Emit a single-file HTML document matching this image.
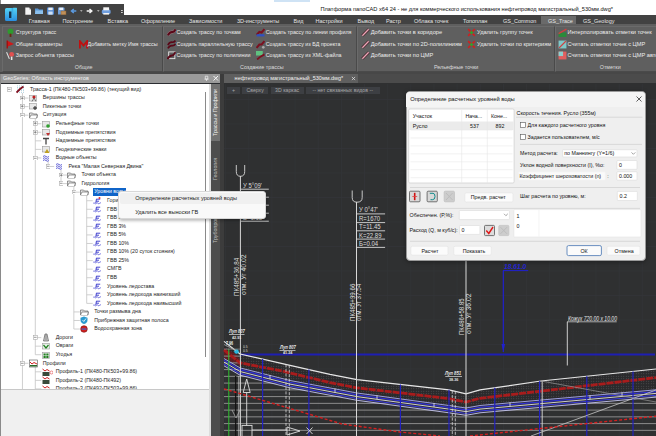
<!DOCTYPE html>
<html><head><meta charset="utf-8">
<style>
*{margin:0;padding:0;box-sizing:border-box}
html,body{width:656px;height:436px;overflow:hidden;background:#2b2d31;font-family:"Liberation Sans",sans-serif;font-size:5.5px;}
.a{position:absolute}
.t{position:absolute;white-space:nowrap;line-height:1}
#title{left:0;top:0;width:656px;height:15px;background:#fff;}
#qat{left:0;top:4px;width:124px;height:11px;background:#424242}
#tabs{left:0;top:15px;width:656px;height:9px;background:#424242}
#ribbon{left:0;top:24px;width:656px;height:48px;background:#5f5f5f}
.tab{color:#e6e6e6;top:19px}
.grp{position:absolute;top:25.5px;height:46px;border:1px solid #6b6b6b;border-bottom-color:#4a4a4a;border-right-color:#4a4a4a}
.rt{color:#ececec;font-size:5.4px}
.gl{color:#dcdcdc;font-size:5.4px;top:63.6px}
.ic{position:absolute;width:7px;height:7px}
</style></head><body>
<!-- title bar -->
<div class="a" id="title"></div>
<div class="a" style="left:0;top:0;width:1px;height:436px;background:#8a8a8a"></div>
<div class="a" style="left:274px;top:0;width:36px;height:2px;background:#cfe3f5"></div>
<div class="t" style="left:320.5px;top:7.2px;color:#111;font-size:5.65px">Платформа nanoCAD x64 24 - не для коммерческого использования нефтепровод магистральный_530мм.dwg*</div>
<div class="a" id="qat"></div>
<div class="a" id="tabs"></div>
<!-- logo -->
<svg class="a" style="left:4px;top:7px" width="14" height="15" viewBox="0 0 14 15"><defs><linearGradient id="lg" x1="0" y1="0" x2="0" y2="1"><stop offset="0" stop-color="#56d4f4"/><stop offset="1" stop-color="#2a8ee0"/></linearGradient></defs><path d="M2.5 1 H8.5 L9.5 0.8 H12.5 Q13 0.8 13 1.5 V12.5 Q13 14 11.5 14 H2.5 Q1 14 1 12.5 V2.5 Q1 1 2.5 1 Z" fill="url(#lg)"/><rect x="5" y="4.5" width="2.6" height="6.5" fill="#16324c"/><rect x="7.6" y="1" width="1.6" height="10" fill="#3aaee8"/></svg>

<!-- qat icons -->
<svg class="a" style="left:0;top:0" width="124" height="24">
<path d="M25.3 7.5 H29 L31 9.5 V14.7 H25.3 Z" fill="#f4f4f4"/><path d="M29 7.5 V9.5 H31" fill="#bbb"/>
<path d="M35 8.5 H38 L39 9.5 H43 V14 H35 Z" fill="#5a96d2"/><path d="M35.5 10.5 H43 V14 H35 Z" fill="#8cc0ec"/>
<rect x="47" y="7.6" width="7" height="7" rx="0.6" fill="#4d86d0"/><rect x="48.3" y="7.6" width="4.4" height="2.6" fill="#f0f0f0"/><rect x="48.3" y="11.5" width="4.4" height="3.2" fill="#cfe0f4"/>
<rect x="58" y="7.6" width="6.5" height="7" rx="0.6" fill="#6f9ed8"/><rect x="59.2" y="7.6" width="4" height="2.4" fill="#e8eef8"/><rect x="61" y="11" width="5" height="3.8" fill="#c0905a" stroke="#8a6030" stroke-width="0.5"/>
<path d="M76.3 11 H71.8 M73.8 9 L71.5 11 L73.8 13" fill="none" stroke="#5b9ae0" stroke-width="1.5"/>
<path d="M80 10.3 L81.3 11.8 L82.6 10.3 Z" fill="#c8c8c8"/>
<path d="M86.7 11 H91.5 M89.5 9 L91.8 11 L89.5 13" fill="none" stroke="#f4f4f4" stroke-width="1.5"/>
<path d="M97 10.3 L98.3 11.8 L99.6 10.3 Z" fill="#c8c8c8"/>
<rect x="101.8" y="9.5" width="8.8" height="4.6" rx="1.5" fill="#6f9ede"/><rect x="103.3" y="7.3" width="5.8" height="3" fill="#f4f4f4"/><rect x="103.3" y="13" width="5.8" height="1.6" fill="#f4f4f4"/>
<rect x="121" y="10" width="1.8" height="1" fill="#ccc"/><rect x="121" y="12" width="1.8" height="1" fill="#ccc"/>
</svg>
<!-- tabs -->
<div class="t tab" style="left:28.7px">Главная</div>
<div class="t tab" style="left:62.5px">Построение</div>
<div class="t tab" style="left:107.5px">Вставка</div>
<div class="t tab" style="left:141px">Оформление</div>
<div class="t tab" style="left:189px">Зависимости</div>
<div class="t tab" style="left:237px">3D-инструменты</div>
<div class="t tab" style="left:293.5px">Вид</div>
<div class="t tab" style="left:315.5px">Настройки</div>
<div class="t tab" style="left:357.5px">Вывод</div>
<div class="t tab" style="left:386px">Растр</div>
<div class="t tab" style="left:414px">Облака точек</div>
<div class="t tab" style="left:463px">Топоплан</div>
<div class="t tab" style="left:503px">GS_Common</div>
<div class="a" style="left:541px;top:16px;width:35px;height:8px;background:#6a6a6a"></div>
<div class="t tab" style="left:548px">GS_Trace</div>
<div class="t tab" style="left:583px">GS_Geology</div>
<!-- ribbon -->
<div class="a" id="ribbon"></div>
<div class="grp" style="left:2px;width:161px"></div>
<div class="grp" style="left:163px;width:194px"></div>
<div class="grp" style="left:357px;width:198px"></div>
<div class="grp" style="left:555px;width:103px"></div>
<div class="a" style="left:0;top:71.5px;width:656px;height:2.5px;background:#474747"></div>
<div class="a" id="ritems" style="left:0;top:1px;width:656px;height:50px"><svg class="a" style="left:5.7px;top:26.7px" width="9" height="9" viewBox="0 0 8 8"><circle cx="4" cy="3" r="2.6" fill="#2e9a2e"/><rect x="3.2" y="5" width="1.6" height="3" fill="#6a2a10"/></svg><div class="t rt" style="left:15.7px;top:29.2px;font-size:5.35px">Структура трасс</div>
<svg class="a" style="left:5.7px;top:38.5px" width="9" height="9" viewBox="0 0 8 8"><path d="M1 0.5 L7 3.5 L1 6 Z" fill="#d01818"/><rect x="0.5" y="0.5" width="1.2" height="7" fill="#a01010"/></svg><div class="t rt" style="left:15.7px;top:41.0px;font-size:5.35px">Общие параметры</div>
<svg class="a" style="left:5.7px;top:49.9px" width="9" height="9" viewBox="0 0 8 8"><path d="M0.5 1 L3 7" stroke="#ddd" stroke-width="1"/><circle cx="5" cy="3" r="2.2" fill="#e05050"/><rect x="4.3" y="5" width="1.4" height="3" fill="#e8e8e8"/></svg><div class="t rt" style="left:15.7px;top:52.400000000000006px;font-size:5.35px">Запрос объекта трассы</div>
<svg class="a" style="left:78.7px;top:38.5px" width="9" height="9" viewBox="0 0 8 8"><path d="M0.8 7.5 L0.8 1 L4 5 L7.2 1 L7.2 7.5" stroke="#c01010" stroke-width="1.6" fill="none"/></svg><div class="t rt" style="left:87.5px;top:41.0px;font-size:5.35px">Добавить метку Имя трассы</div>
<svg class="a" style="left:166.6px;top:26.7px" width="9" height="9" viewBox="0 0 8 8"><path d="M0.8 6.5 Q2.5 3.2 5 3.6 Q6.5 3.6 7.5 1.2" stroke="#d08090" stroke-width="2.6" fill="none" opacity="0.5"/><path d="M0.8 6.5 Q2.5 3.2 5 3.6 Q6.5 3.6 7.5 1.2" stroke="#5a0818" stroke-width="1.8" fill="none"/></svg><div class="t rt" style="left:176.6px;top:29.2px;font-size:5.35px">Создать трассу по точкам</div>
<svg class="a" style="left:166.6px;top:38.5px" width="9" height="9" viewBox="0 0 8 8"><path d="M0.8 4.5 Q2.5 1.5 5 2 Q6.5 2 7.5 0.5 M0.8 7.5 Q2.5 4.5 5 5 Q6.5 5 7.5 3.5" stroke="#5a0818" stroke-width="1.5" fill="none"/></svg><div class="t rt" style="left:176.6px;top:41.0px;font-size:5.35px">Создать параллельную трассу</div>
<svg class="a" style="left:166.6px;top:49.9px" width="9" height="9" viewBox="0 0 8 8"><rect x="1.5" y="0.8" width="5.5" height="6" fill="none" stroke="#e8e8e8" stroke-width="0.8"/><path d="M0.5 7.2 Q2 4 4.5 4 Q6 4 7.5 1" stroke="#5a0818" stroke-width="1.7" fill="none"/></svg><div class="t rt" style="left:176.6px;top:52.400000000000006px;font-size:5.35px">Создать трассу по полилинии</div>
<svg class="a" style="left:255.7px;top:26.7px" width="9" height="9" viewBox="0 0 8 8"><path d="M0.5 6 L3 3.5 L5 4 L7.5 1" stroke="#7a1020" stroke-width="1.8" fill="none"/><rect x="0.5" y="5.5" width="7" height="2" fill="#3050c0"/></svg><div class="t rt" style="left:265.7px;top:29.2px;font-size:5.35px">Создать трассу по линии профиля</div>
<svg class="a" style="left:255.7px;top:38.5px" width="9" height="9" viewBox="0 0 8 8"><path d="M0.5 7 L3 4 L5 4 L7.5 1" stroke="#7a1020" stroke-width="1.8" fill="none"/><circle cx="6.5" cy="6.5" r="1.2" fill="#aaa"/></svg><div class="t rt" style="left:265.7px;top:41.0px;font-size:5.35px">Создать трассу из БД проекта</div>
<svg class="a" style="left:255.7px;top:49.9px" width="9" height="9" viewBox="0 0 8 8"><rect x="0" y="0" width="6" height="4" fill="#60c080"/><path d="M1 7.5 L4 5 L7.5 3" stroke="#7a1020" stroke-width="1.6" fill="none"/></svg><div class="t rt" style="left:265.7px;top:52.400000000000006px;font-size:5.35px">Создать трассу из XML-файла</div>
<svg class="a" style="left:360.7px;top:26.7px" width="9" height="9" viewBox="0 0 8 8"><path d="M1.2 6.8 L6.8 1.2" stroke="#3a1018" stroke-width="2.4"/><path d="M1.2 6.8 L6.8 1.2" stroke="#e8a8b8" stroke-width="1.3"/></svg><div class="t rt" style="left:370.7px;top:29.2px;font-size:5.65px">Добавить точки в коридоре</div>
<svg class="a" style="left:360.7px;top:38.5px" width="9" height="9" viewBox="0 0 8 8"><path d="M1.2 6.8 L6.8 1.2" stroke="#3a1018" stroke-width="2.4"/><path d="M1.2 6.8 L6.8 1.2" stroke="#e8a8b8" stroke-width="1.3"/></svg><div class="t rt" style="left:370.7px;top:41.0px;font-size:5.65px">Добавить точки по 2D-полилиниям</div>
<svg class="a" style="left:360.7px;top:49.9px" width="9" height="9" viewBox="0 0 8 8"><path d="M1.2 6.8 L6.8 1.2" stroke="#3a1018" stroke-width="2.4"/><path d="M1.2 6.8 L6.8 1.2" stroke="#e8a8b8" stroke-width="1.3"/></svg><div class="t rt" style="left:370.7px;top:52.400000000000006px;font-size:5.65px">Добавить точки по ЦМР</div>
<svg class="a" style="left:467.0px;top:26.7px" width="9" height="9" viewBox="0 0 8 8"><path d="M1 1 L7 7 M7 1 L1 7" stroke="#d02020" stroke-width="1.4"/><circle cx="4" cy="4" r="1.4" fill="#30a030"/></svg><div class="t rt" style="left:477px;top:29.2px;font-size:5.65px">Удалить группу точек</div>
<svg class="a" style="left:467.0px;top:38.5px" width="9" height="9" viewBox="0 0 8 8"><path d="M1 1 L7 7 M7 1 L1 7" stroke="#d02020" stroke-width="1.4"/><circle cx="4" cy="4" r="1.4" fill="#30a030"/></svg><div class="t rt" style="left:477px;top:41.0px;font-size:5.65px">Удалить точки по критериям</div>
<svg class="a" style="left:557.6px;top:26.7px" width="9" height="9" viewBox="0 0 8 8"><rect x="0.5" y="4" width="7" height="4" fill="#2a8a3a"/><path d="M0.5 5 L7.5 1" stroke="#d04040" stroke-width="1.2"/></svg><div class="t rt" style="left:567.6px;top:29.2px;font-size:5.65px">Интерполировать отметки точек</div>
<svg class="a" style="left:557.6px;top:38.5px" width="9" height="9" viewBox="0 0 8 8"><rect x="0.5" y="0.5" width="7" height="7" fill="#7fc8c8"/><path d="M1 7 L7 1" stroke="#d04040" stroke-width="1.2"/></svg><div class="t rt" style="left:567.6px;top:41.0px;font-size:5.65px">Считать отметки точек с ЦМР</div>
<svg class="a" style="left:557.6px;top:49.9px" width="9" height="9" viewBox="0 0 8 8"><rect x="0.5" y="0.5" width="7" height="7" fill="#e06060"/><rect x="0.5" y="0.5" width="4" height="4" fill="#8ccfcf"/></svg><div class="t rt" style="left:567.6px;top:52.400000000000006px;font-size:5.65px">Считать отметки точек с ЦМР автоматически</div>
<div class="t gl" style="left:74.7px">Общие</div>
<div class="t gl" style="left:240px">Создание трассы</div>
<div class="t gl" style="left:433.9px">Рельефные точки</div>
<div class="t gl" style="left:599.7px">Отметки</div></div>
<!-- PAL_START -->
<div class="a" style="left:1px;top:74px;width:219px;height:9px;background:#9a9a9a"></div>
<div class="t" style="left:3px;top:75.5px;color:#f2f2f2;font-size:5.4px">GeoSeries: Область инструментов</div>
<svg class="a" style="left:203px;top:75px" width="16" height="7" viewBox="0 0 16 7"><path d="M2.3 1.2 H4.8 V4 H2.3 Z M1.5 4.2 H5.6 M3.55 4.2 V6" stroke="#f0f0f0" stroke-width="0.7" fill="none"/><path d="M10.5 1 L15 5.5 M15 1 L10.5 5.5" stroke="#f4f4f4" stroke-width="1"/></svg>
<div class="a" style="left:1px;top:83.5px;width:208px;height:305px;background:#fff"></div>
<div class="a" style="left:1px;top:388.5px;width:208px;height:1px;background:#c8c8c8"></div>
<div class="a" style="left:1px;top:389.5px;width:208px;height:47px;background:#f0f0f0"></div>
<div class="a" style="left:205px;top:92px;width:1.2px;height:265px;background:#8a8a8a"></div>
<div class="a" style="left:0;top:0;width:209px;height:389px;overflow:hidden">
<svg class="a" style="left:0;top:0" width="210" height="389" stroke="#c4c4c4" stroke-width="0.8"><line x1="22.45" y1="93.0" x2="22.45" y2="389" /><line x1="22.45" y1="98.055" x2="28.45" y2="98.055" /><line x1="22.45" y1="106.61" x2="28.45" y2="106.61" /><line x1="35.3" y1="118.66499999999999" x2="35.3" y2="354.705" /><line x1="22.45" y1="115.16499999999999" x2="28.45" y2="115.16499999999999" /><line x1="35.3" y1="123.72" x2="41.3" y2="123.72" /><line x1="35.3" y1="132.275" x2="41.3" y2="132.275" /><line x1="35.3" y1="140.82999999999998" x2="41.3" y2="140.82999999999998" /><line x1="35.3" y1="149.385" x2="41.3" y2="149.385" /><line x1="48.15" y1="161.44" x2="48.15" y2="166.495" /><line x1="35.3" y1="157.94" x2="41.3" y2="157.94" /><line x1="61.0" y1="169.995" x2="61.0" y2="183.605" /><line x1="48.15" y1="166.495" x2="54.15" y2="166.495" /><line x1="61.0" y1="175.05" x2="67.0" y2="175.05" /><line x1="73.85" y1="187.105" x2="73.85" y2="329.03999999999996" /><line x1="61.0" y1="183.605" x2="67.0" y2="183.605" /><line x1="86.69999999999999" y1="195.66" x2="86.69999999999999" y2="303.375" /><line x1="73.85" y1="192.16" x2="79.85" y2="192.16" /><line x1="86.69999999999999" y1="200.715" x2="92.69999999999999" y2="200.715" /><line x1="86.69999999999999" y1="209.26999999999998" x2="92.69999999999999" y2="209.26999999999998" /><line x1="86.69999999999999" y1="217.825" x2="92.69999999999999" y2="217.825" /><line x1="86.69999999999999" y1="226.38" x2="92.69999999999999" y2="226.38" /><line x1="86.69999999999999" y1="234.935" x2="92.69999999999999" y2="234.935" /><line x1="86.69999999999999" y1="243.49" x2="92.69999999999999" y2="243.49" /><line x1="86.69999999999999" y1="252.045" x2="92.69999999999999" y2="252.045" /><line x1="86.69999999999999" y1="260.6" x2="92.69999999999999" y2="260.6" /><line x1="86.69999999999999" y1="269.155" x2="92.69999999999999" y2="269.155" /><line x1="86.69999999999999" y1="277.71" x2="92.69999999999999" y2="277.71" /><line x1="86.69999999999999" y1="286.265" x2="92.69999999999999" y2="286.265" /><line x1="86.69999999999999" y1="294.82" x2="92.69999999999999" y2="294.82" /><line x1="86.69999999999999" y1="303.375" x2="92.69999999999999" y2="303.375" /><line x1="73.85" y1="311.93" x2="79.85" y2="311.93" /><line x1="73.85" y1="320.485" x2="79.85" y2="320.485" /><line x1="73.85" y1="329.03999999999996" x2="79.85" y2="329.03999999999996" /><line x1="35.3" y1="337.595" x2="41.3" y2="337.595" /><line x1="35.3" y1="346.15" x2="41.3" y2="346.15" /><line x1="35.3" y1="354.705" x2="41.3" y2="354.705" /><line x1="35.3" y1="366.76" x2="35.3" y2="389" /><line x1="22.45" y1="363.26" x2="28.45" y2="363.26" /><line x1="35.3" y1="371.815" x2="41.3" y2="371.815" /><line x1="35.3" y1="380.37" x2="41.3" y2="380.37" /><line x1="35.3" y1="388.925" x2="41.3" y2="388.925" /></svg>
<svg class="a" style="left:7.30px;top:87.20px" width="4.6" height="4.6" viewBox="-2.3 -2.3 4.6 4.6"><rect x="-2" y="-2" width="4" height="4" fill="#fff" stroke="#aaa" stroke-width="0.6"/><path d="M-1.3 0 H1.3" stroke="#555" stroke-width="0.6"/></svg>
<svg class="a" style="left:16.00px;top:85.30px" width="11" height="9" viewBox="0 0 11 9"><rect x="1" y="0" width="7" height="8" fill="#fff"/><path d="M1.5 0.5 V8 M3.5 0.5 V8 M5.5 0.5 V8 M7.5 0.5 V8" stroke="#3a90b0" stroke-width="0.5" stroke-dasharray="0.8 0.8"/><path d="M0.5 7.5 L4 4 L7.5 1.5" stroke="#801020" stroke-width="1.8"/></svg>
<div class="t" style="left:30.00px;top:86.80px;color:#1e1e1e;font-size:5.25px">Трасса-1 (ПК480-ПК503+99.86) (текущий вид)</div>
<svg class="a" style="left:20.15px;top:95.76px" width="4.6" height="4.6" viewBox="-2.3 -2.3 4.6 4.6"><rect x="-2" y="-2" width="4" height="4" fill="#fff" stroke="#aaa" stroke-width="0.6"/><path d="M-1.3 0 H1.3 M0 -1.3 V1.3" stroke="#555" stroke-width="0.6"/></svg>
<svg class="a" style="left:28.85px;top:93.86px" width="11" height="9" viewBox="0 0 11 9"><rect x="0.5" y="1.5" width="7" height="5.5" fill="#e8e8e8" stroke="#999" stroke-width="0.6"/><circle cx="5" cy="3" r="1.6" fill="#c02020"/><path d="M3 7.5 L5 4 L7 7.5" stroke="#333" stroke-width="0.6" fill="none"/></svg>
<div class="t" style="left:42.85px;top:95.36px;color:#1e1e1e;font-size:5.25px">Вершины трассы</div>
<svg class="a" style="left:20.15px;top:104.31px" width="4.6" height="4.6" viewBox="-2.3 -2.3 4.6 4.6"><rect x="-2" y="-2" width="4" height="4" fill="#fff" stroke="#aaa" stroke-width="0.6"/><path d="M-1.3 0 H1.3 M0 -1.3 V1.3" stroke="#555" stroke-width="0.6"/></svg>
<svg class="a" style="left:28.85px;top:102.41px" width="11" height="9" viewBox="0 0 11 9"><rect x="0.5" y="1.5" width="7" height="5.5" fill="#e8e8e8" stroke="#999" stroke-width="0.6"/><path d="M6 4 V8 M4 6 H8" stroke="#222" stroke-width="1"/></svg>
<div class="t" style="left:42.85px;top:103.91px;color:#1e1e1e;font-size:5.25px">Пикетные точки</div>
<svg class="a" style="left:20.15px;top:112.86px" width="4.6" height="4.6" viewBox="-2.3 -2.3 4.6 4.6"><rect x="-2" y="-2" width="4" height="4" fill="#fff" stroke="#aaa" stroke-width="0.6"/><path d="M-1.3 0 H1.3" stroke="#555" stroke-width="0.6"/></svg>
<svg class="a" style="left:28.85px;top:110.96px" width="11" height="9" viewBox="0 0 11 9"><path d="M0.5 2 H3.5 L4.5 3 H8 V7 H0.5 Z" fill="#e6e6e6" stroke="#555" stroke-width="0.6"/><path d="M0.5 7 L2 4 H8.5 L7.5 7" fill="#fff" stroke="#555" stroke-width="0.6"/></svg>
<div class="t" style="left:42.85px;top:112.46px;color:#1e1e1e;font-size:5.25px">Ситуация</div>
<svg class="a" style="left:33.00px;top:121.42px" width="4.6" height="4.6" viewBox="-2.3 -2.3 4.6 4.6"><rect x="-2" y="-2" width="4" height="4" fill="#fff" stroke="#aaa" stroke-width="0.6"/><path d="M-1.3 0 H1.3 M0 -1.3 V1.3" stroke="#555" stroke-width="0.6"/></svg>
<svg class="a" style="left:41.70px;top:119.52px" width="11" height="9" viewBox="0 0 11 9"><rect x="0.5" y="1.5" width="7" height="5.5" fill="#e8e8e8" stroke="#999" stroke-width="0.6"/><circle cx="6" cy="6" r="1.8" fill="#30a030"/></svg>
<div class="t" style="left:55.70px;top:121.02px;color:#1e1e1e;font-size:5.25px">Рельефные точки</div>
<svg class="a" style="left:33.00px;top:129.97px" width="4.6" height="4.6" viewBox="-2.3 -2.3 4.6 4.6"><rect x="-2" y="-2" width="4" height="4" fill="#fff" stroke="#aaa" stroke-width="0.6"/><path d="M-1.3 0 H1.3 M0 -1.3 V1.3" stroke="#555" stroke-width="0.6"/></svg>
<svg class="a" style="left:41.70px;top:128.08px" width="11" height="9" viewBox="0 0 11 9"><rect x="0.5" y="1.5" width="7" height="5.5" fill="#e8e8e8" stroke="#999" stroke-width="0.6"/><path d="M4 5 L8 5 L6 8 Z" fill="#c03030"/></svg>
<div class="t" style="left:55.70px;top:129.58px;color:#1e1e1e;font-size:5.25px">Подземные препятствия</div>
<svg class="a" style="left:41.70px;top:136.63px" width="11" height="9" viewBox="0 0 11 9"><path d="M1 1.5 H7 M4 1.5 V7.5" stroke="#444" stroke-width="1.3"/></svg>
<div class="t" style="left:55.70px;top:138.13px;color:#1e1e1e;font-size:5.25px">Надземные препятствия</div>
<svg class="a" style="left:41.70px;top:145.19px" width="11" height="9" viewBox="0 0 11 9"><rect x="0.5" y="1.5" width="7" height="5.5" fill="#e8e8e8" stroke="#999" stroke-width="0.6"/><path d="M5 4 L7.5 8 H2.5 Z" fill="#c0a020"/></svg>
<div class="t" style="left:55.70px;top:146.69px;color:#1e1e1e;font-size:5.25px">Геодезические знаки</div>
<svg class="a" style="left:33.00px;top:155.64px" width="4.6" height="4.6" viewBox="-2.3 -2.3 4.6 4.6"><rect x="-2" y="-2" width="4" height="4" fill="#fff" stroke="#aaa" stroke-width="0.6"/><path d="M-1.3 0 H1.3" stroke="#555" stroke-width="0.6"/></svg>
<svg class="a" style="left:41.70px;top:153.74px" width="11" height="9" viewBox="0 0 11 9"><path d="M1 2.5 Q2.5 1 4 2.5 T7 2.5 M1 4.5 Q2.5 3 4 4.5 T7 4.5 M1 6.5 Q2.5 5 4 6.5 T7 6.5" stroke="#5050d0" stroke-width="0.9" fill="none"/></svg>
<div class="t" style="left:55.70px;top:155.24px;color:#1e1e1e;font-size:5.25px">Водные объекты</div>
<svg class="a" style="left:45.85px;top:164.19px" width="4.6" height="4.6" viewBox="-2.3 -2.3 4.6 4.6"><rect x="-2" y="-2" width="4" height="4" fill="#fff" stroke="#aaa" stroke-width="0.6"/><path d="M-1.3 0 H1.3" stroke="#555" stroke-width="0.6"/></svg>
<svg class="a" style="left:54.55px;top:162.30px" width="11" height="9" viewBox="0 0 11 9"><path d="M1 2.5 Q2.5 1 4 2.5 T7 2.5 M1 4.5 Q2.5 3 4 4.5 T7 4.5 M1 6.5 Q2.5 5 4 6.5 T7 6.5" stroke="#5050d0" stroke-width="0.9" fill="none"/></svg>
<div class="t" style="left:68.55px;top:163.80px;color:#1e1e1e;font-size:5.25px">Река "Малая Северная Двина"</div>
<svg class="a" style="left:58.70px;top:172.75px" width="4.6" height="4.6" viewBox="-2.3 -2.3 4.6 4.6"><rect x="-2" y="-2" width="4" height="4" fill="#fff" stroke="#aaa" stroke-width="0.6"/><path d="M-1.3 0 H1.3 M0 -1.3 V1.3" stroke="#555" stroke-width="0.6"/></svg>
<svg class="a" style="left:67.40px;top:170.85px" width="11" height="9" viewBox="0 0 11 9"><path d="M0.5 2 H3.5 L4.5 3 H8 V7 H0.5 Z" fill="#e6e6e6" stroke="#555" stroke-width="0.6"/><path d="M0.5 7 L2 4 H8.5 L7.5 7" fill="#fff" stroke="#555" stroke-width="0.6"/></svg>
<div class="t" style="left:81.40px;top:172.35px;color:#1e1e1e;font-size:5.25px">Точки объекта</div>
<svg class="a" style="left:58.70px;top:181.30px" width="4.6" height="4.6" viewBox="-2.3 -2.3 4.6 4.6"><rect x="-2" y="-2" width="4" height="4" fill="#fff" stroke="#aaa" stroke-width="0.6"/><path d="M-1.3 0 H1.3" stroke="#555" stroke-width="0.6"/></svg>
<svg class="a" style="left:67.40px;top:179.41px" width="11" height="9" viewBox="0 0 11 9"><path d="M0.5 2 H3.5 L4.5 3 H8 V7 H0.5 Z" fill="#e6e6e6" stroke="#555" stroke-width="0.6"/><path d="M0.5 7 L2 4 H8.5 L7.5 7" fill="#fff" stroke="#555" stroke-width="0.6"/></svg>
<div class="t" style="left:81.40px;top:180.91px;color:#1e1e1e;font-size:5.25px">Гидрология</div>
<svg class="a" style="left:71.55px;top:189.86px" width="4.6" height="4.6" viewBox="-2.3 -2.3 4.6 4.6"><rect x="-2" y="-2" width="4" height="4" fill="#fff" stroke="#aaa" stroke-width="0.6"/><path d="M-1.3 0 H1.3" stroke="#555" stroke-width="0.6"/></svg>
<svg class="a" style="left:80.25px;top:187.96px" width="11" height="9" viewBox="0 0 11 9"><path d="M0.5 2 H3.5 L4.5 3 H8 V7 H0.5 Z" fill="#e6e6e6" stroke="#555" stroke-width="0.6"/><path d="M0.5 7 L2 4 H8.5 L7.5 7" fill="#fff" stroke="#555" stroke-width="0.6"/></svg>
<div class="a" style="left:92.75px;top:188.36px;width:33px;height:7.2px;background:#1064c8"></div>
<div class="t" style="left:94.25px;top:189.46px;color:#fff;font-size:5.25px">Уровни воды</div>
<svg class="a" style="left:93.10px;top:196.52px" width="11" height="9" viewBox="0 0 11 9"><path d="M3.2 2.2 H7.2 M3.4 2.2 L2.8 6 M3.2 4.2 H6" stroke="#3030c8" stroke-width="0.9" fill="none"/><path d="M0.2 6.3 Q1 5.3 1.8 6.3 T3.4 6.3 T5 6.3 T6.6 6.3 T8 6.3" stroke="#3a3ad0" stroke-width="0.7" fill="none"/><circle cx="6.5" cy="1" r="1" fill="#e03030"/></svg>
<div class="t" style="left:107.10px;top:198.02px;color:#1e1e1e;font-size:5.25px">Горизонт меженных вод</div>
<svg class="a" style="left:93.10px;top:205.07px" width="11" height="9" viewBox="0 0 11 9"><path d="M3.2 2.2 H7.2 M3.4 2.2 L2.8 6 M3.2 4.2 H6" stroke="#3030c8" stroke-width="0.9" fill="none"/><path d="M0.2 6.3 Q1 5.3 1.8 6.3 T3.4 6.3 T5 6.3 T6.6 6.3 T8 6.3" stroke="#3a3ad0" stroke-width="0.7" fill="none"/></svg>
<div class="t" style="left:107.10px;top:206.57px;color:#1e1e1e;font-size:5.25px">ГВВ 1%</div>
<svg class="a" style="left:93.10px;top:213.62px" width="11" height="9" viewBox="0 0 11 9"><path d="M3.2 2.2 H7.2 M3.4 2.2 L2.8 6 M3.2 4.2 H6" stroke="#3030c8" stroke-width="0.9" fill="none"/><path d="M0.2 6.3 Q1 5.3 1.8 6.3 T3.4 6.3 T5 6.3 T6.6 6.3 T8 6.3" stroke="#3a3ad0" stroke-width="0.7" fill="none"/></svg>
<div class="t" style="left:107.10px;top:215.12px;color:#1e1e1e;font-size:5.25px">ГВВ 2%</div>
<svg class="a" style="left:93.10px;top:222.18px" width="11" height="9" viewBox="0 0 11 9"><path d="M3.2 2.2 H7.2 M3.4 2.2 L2.8 6 M3.2 4.2 H6" stroke="#3030c8" stroke-width="0.9" fill="none"/><path d="M0.2 6.3 Q1 5.3 1.8 6.3 T3.4 6.3 T5 6.3 T6.6 6.3 T8 6.3" stroke="#3a3ad0" stroke-width="0.7" fill="none"/></svg>
<div class="t" style="left:107.10px;top:223.68px;color:#1e1e1e;font-size:5.25px">ГВВ 3%</div>
<svg class="a" style="left:93.10px;top:230.74px" width="11" height="9" viewBox="0 0 11 9"><path d="M3.2 2.2 H7.2 M3.4 2.2 L2.8 6 M3.2 4.2 H6" stroke="#3030c8" stroke-width="0.9" fill="none"/><path d="M0.2 6.3 Q1 5.3 1.8 6.3 T3.4 6.3 T5 6.3 T6.6 6.3 T8 6.3" stroke="#3a3ad0" stroke-width="0.7" fill="none"/></svg>
<div class="t" style="left:107.10px;top:232.24px;color:#1e1e1e;font-size:5.25px">ГВВ 5%</div>
<svg class="a" style="left:93.10px;top:239.29px" width="11" height="9" viewBox="0 0 11 9"><path d="M3.2 2.2 H7.2 M3.4 2.2 L2.8 6 M3.2 4.2 H6" stroke="#3030c8" stroke-width="0.9" fill="none"/><path d="M0.2 6.3 Q1 5.3 1.8 6.3 T3.4 6.3 T5 6.3 T6.6 6.3 T8 6.3" stroke="#3a3ad0" stroke-width="0.7" fill="none"/></svg>
<div class="t" style="left:107.10px;top:240.79px;color:#1e1e1e;font-size:5.25px">ГВВ 10%</div>
<svg class="a" style="left:93.10px;top:247.84px" width="11" height="9" viewBox="0 0 11 9"><path d="M3.2 2.2 H7.2 M3.4 2.2 L2.8 6 M3.2 4.2 H6" stroke="#3030c8" stroke-width="0.9" fill="none"/><path d="M0.2 6.3 Q1 5.3 1.8 6.3 T3.4 6.3 T5 6.3 T6.6 6.3 T8 6.3" stroke="#3a3ad0" stroke-width="0.7" fill="none"/></svg>
<div class="t" style="left:107.10px;top:249.34px;color:#1e1e1e;font-size:5.25px">ГВВ 10% (20 суток стояния)</div>
<svg class="a" style="left:93.10px;top:256.40px" width="11" height="9" viewBox="0 0 11 9"><path d="M3.2 2.2 H7.2 M3.4 2.2 L2.8 6 M3.2 4.2 H6" stroke="#3030c8" stroke-width="0.9" fill="none"/><path d="M0.2 6.3 Q1 5.3 1.8 6.3 T3.4 6.3 T5 6.3 T6.6 6.3 T8 6.3" stroke="#3a3ad0" stroke-width="0.7" fill="none"/></svg>
<div class="t" style="left:107.10px;top:257.90px;color:#1e1e1e;font-size:5.25px">ГВВ 25%</div>
<svg class="a" style="left:93.10px;top:264.95px" width="11" height="9" viewBox="0 0 11 9"><path d="M3.2 2.2 H7.2 M3.4 2.2 L2.8 6 M3.2 4.2 H6" stroke="#3030c8" stroke-width="0.9" fill="none"/><path d="M0.2 6.3 Q1 5.3 1.8 6.3 T3.4 6.3 T5 6.3 T6.6 6.3 T8 6.3" stroke="#3a3ad0" stroke-width="0.7" fill="none"/></svg>
<div class="t" style="left:107.10px;top:266.45px;color:#1e1e1e;font-size:5.25px">СМГВ</div>
<svg class="a" style="left:93.10px;top:273.51px" width="11" height="9" viewBox="0 0 11 9"><path d="M3.2 2.2 H7.2 M3.4 2.2 L2.8 6 M3.2 4.2 H6" stroke="#3030c8" stroke-width="0.9" fill="none"/><path d="M0.2 6.3 Q1 5.3 1.8 6.3 T3.4 6.3 T5 6.3 T6.6 6.3 T8 6.3" stroke="#3a3ad0" stroke-width="0.7" fill="none"/></svg>
<div class="t" style="left:107.10px;top:275.01px;color:#1e1e1e;font-size:5.25px">ГВВ</div>
<svg class="a" style="left:93.10px;top:282.06px" width="11" height="9" viewBox="0 0 11 9"><path d="M3.2 2.2 H7.2 M3.4 2.2 L2.8 6 M3.2 4.2 H6" stroke="#3030c8" stroke-width="0.9" fill="none"/><path d="M0.2 6.3 Q1 5.3 1.8 6.3 T3.4 6.3 T5 6.3 T6.6 6.3 T8 6.3" stroke="#3a3ad0" stroke-width="0.7" fill="none"/></svg>
<div class="t" style="left:107.10px;top:283.56px;color:#1e1e1e;font-size:5.25px">Уровень ледостава</div>
<svg class="a" style="left:93.10px;top:290.62px" width="11" height="9" viewBox="0 0 11 9"><path d="M3.2 2.2 H7.2 M3.4 2.2 L2.8 6 M3.2 4.2 H6" stroke="#3030c8" stroke-width="0.9" fill="none"/><path d="M0.2 6.3 Q1 5.3 1.8 6.3 T3.4 6.3 T5 6.3 T6.6 6.3 T8 6.3" stroke="#3a3ad0" stroke-width="0.7" fill="none"/></svg>
<div class="t" style="left:107.10px;top:292.12px;color:#1e1e1e;font-size:5.25px">Уровень ледохода наинизший</div>
<svg class="a" style="left:93.10px;top:299.18px" width="11" height="9" viewBox="0 0 11 9"><path d="M3.2 2.2 H7.2 M3.4 2.2 L2.8 6 M3.2 4.2 H6" stroke="#3030c8" stroke-width="0.9" fill="none"/><path d="M0.2 6.3 Q1 5.3 1.8 6.3 T3.4 6.3 T5 6.3 T6.6 6.3 T8 6.3" stroke="#3a3ad0" stroke-width="0.7" fill="none"/></svg>
<div class="t" style="left:107.10px;top:300.68px;color:#1e1e1e;font-size:5.25px">Уровень ледохода наивысший</div>
<svg class="a" style="left:80.25px;top:307.73px" width="11" height="9" viewBox="0 0 11 9"><path d="M0.5 2 H3.5 L4.5 3 H8 V7 H0.5 Z" fill="#e6e6e6" stroke="#555" stroke-width="0.6"/><path d="M0.5 7 L2 4 H8.5 L7.5 7" fill="#fff" stroke="#555" stroke-width="0.6"/></svg>
<div class="t" style="left:94.25px;top:309.23px;color:#1e1e1e;font-size:5.25px">Точки размыва дна</div>
<svg class="a" style="left:80.25px;top:316.29px" width="11" height="9" viewBox="0 0 11 9"><path d="M4 0.5 L7.5 1.8 V4 Q7.5 7 4 8 Q0.5 7 0.5 4 V1.8 Z" fill="#2a9ad0"/><path d="M2.5 4 L3.8 5.5 L6 2.5" stroke="#fff" stroke-width="0.8" fill="none"/></svg>
<div class="t" style="left:94.25px;top:317.79px;color:#1e1e1e;font-size:5.25px">Прибрежная защитная полоса</div>
<svg class="a" style="left:80.25px;top:324.84px" width="11" height="9" viewBox="0 0 11 9"><circle cx="4" cy="4" r="3.3" fill="#d02020" stroke="#7a1010" stroke-width="0.6"/><rect x="1.5" y="3.3" width="5" height="1.5" fill="#5a5ab0"/></svg>
<div class="t" style="left:94.25px;top:326.34px;color:#1e1e1e;font-size:5.25px">Водоохранная зона</div>
<svg class="a" style="left:33.00px;top:335.30px" width="4.6" height="4.6" viewBox="-2.3 -2.3 4.6 4.6"><rect x="-2" y="-2" width="4" height="4" fill="#fff" stroke="#aaa" stroke-width="0.6"/><path d="M-1.3 0 H1.3" stroke="#555" stroke-width="0.6"/></svg>
<svg class="a" style="left:41.70px;top:333.40px" width="11" height="9" viewBox="0 0 11 9"><path d="M1.5 8 L3 1 H5 L6.5 8 Z" fill="#ccc" stroke="#444" stroke-width="0.6"/><path d="M4 2 V7" stroke="#444" stroke-width="0.5"/></svg>
<div class="t" style="left:55.70px;top:334.90px;color:#1e1e1e;font-size:5.25px">Дороги</div>
<svg class="a" style="left:41.70px;top:341.95px" width="11" height="9" viewBox="0 0 11 9"><rect x="0.5" y="1.5" width="7" height="5.5" fill="#e8f0e8" stroke="#999" stroke-width="0.6"/><path d="M1.5 3 L4 6 L6.5 3" stroke="#208020" stroke-width="1.2" fill="none"/></svg>
<div class="t" style="left:55.70px;top:343.45px;color:#1e1e1e;font-size:5.25px">Овраги</div>
<svg class="a" style="left:41.70px;top:350.50px" width="11" height="9" viewBox="0 0 11 9"><rect x="0.5" y="1.5" width="7" height="6" fill="#f0f0f0" stroke="#999" stroke-width="0.6"/><rect x="1.5" y="2.5" width="2.2" height="2" fill="#208020"/><rect x="4.3" y="2.5" width="2.2" height="2" fill="#208020"/><rect x="1.5" y="5" width="2.2" height="2" fill="#208020"/><rect x="4.3" y="5" width="2.2" height="2" fill="#208020"/></svg>
<div class="t" style="left:55.70px;top:352.00px;color:#1e1e1e;font-size:5.25px">Угодья</div>
<svg class="a" style="left:20.15px;top:360.96px" width="4.6" height="4.6" viewBox="-2.3 -2.3 4.6 4.6"><rect x="-2" y="-2" width="4" height="4" fill="#fff" stroke="#aaa" stroke-width="0.6"/><path d="M-1.3 0 H1.3" stroke="#555" stroke-width="0.6"/></svg>
<svg class="a" style="left:28.85px;top:359.06px" width="11" height="9" viewBox="0 0 11 9"><rect x="0.5" y="1" width="8" height="7" fill="#fff" stroke="#555" stroke-width="0.6"/><path d="M1 3 L3 5 L5 3.5 L8 5" stroke="#d02020" stroke-width="1" fill="none"/><rect x="1" y="6" width="7" height="1.5" fill="#2a6a2a"/></svg>
<div class="t" style="left:42.85px;top:360.56px;color:#1e1e1e;font-size:5.25px">Профили</div>
<svg class="a" style="left:41.70px;top:367.62px" width="11" height="9" viewBox="0 0 11 9"><rect x="0.5" y="4" width="7" height="4" fill="#3a4a3a"/><path d="M0.5 1 L3 3 L5 1.5 L7.5 3" stroke="#d02020" stroke-width="1" fill="none"/><circle cx="9.5" cy="4.5" r="1.5" fill="none" stroke="#e04040" stroke-width="0.6"/></svg>
<div class="t" style="left:55.70px;top:369.12px;color:#1e1e1e;font-size:5.25px">Профиль-1 (ПК480-ПК503+99.86)</div>
<svg class="a" style="left:41.70px;top:376.17px" width="11" height="9" viewBox="0 0 11 9"><rect x="0.5" y="4" width="7" height="4" fill="#3a4a3a"/><path d="M0.5 1 L3 3 L5 1.5 L7.5 3" stroke="#d02020" stroke-width="1" fill="none"/></svg>
<div class="t" style="left:55.70px;top:377.67px;color:#1e1e1e;font-size:5.25px">Профиль-2 (ПК480-ПК492)</div>
<svg class="a" style="left:41.70px;top:384.73px" width="11" height="9" viewBox="0 0 11 9"><rect x="0.5" y="4" width="7" height="4" fill="#3a4a3a"/><path d="M0.5 1 L3 3 L5 1.5 L7.5 3" stroke="#d02020" stroke-width="1" fill="none"/></svg>
<div class="t" style="left:55.70px;top:386.23px;color:#1e1e1e;font-size:5.25px">Профиль-3 (ПК492-ПК503+99.86)</div>
</div>
<!-- PAL_END -->
<div class="a" style="left:209px;top:83.5px;width:2px;height:353px;background:#dcdcdc"></div>
<div class="a" style="left:211px;top:83.5px;width:9px;height:353px;background:#4d4d4d"></div>
<div class="a" style="left:211px;top:83.5px;width:9px;height:57px;background:#717171"></div>
<div class="a" style="left:220px;top:74px;width:4px;height:362px;background:#3c3c3c"></div>
<div class="t" style="left:213px;top:136px;color:#f0f0f0;font-size:5.3px;transform-origin:0 0;transform:rotate(-90deg)">Трассы и Профили</div>
<div class="t" style="left:213px;top:180px;color:#bdbdbd;font-size:5.3px;transform-origin:0 0;transform:rotate(-90deg)">Геология</div>
<div class="t" style="left:213px;top:243px;color:#bdbdbd;font-size:5.3px;transform-origin:0 0;transform:rotate(-90deg)">Трубопроводы</div>
<div class="a" style="left:224px;top:74px;width:432px;height:9px;background:#4b4b4b"></div>
<div class="a" style="left:224px;top:74px;width:134px;height:9px;background:#5f5f5f"></div>
<div class="t" style="left:234.6px;top:75.8px;color:#f2f2f2;font-size:5.5px">нефтепровод магистральный_530мм.dwg*</div>
<svg class="a" style="left:351px;top:76px" width="5" height="5"><path d="M0.9 0.9 L4.1 4.1 M4.1 0.9 L0.9 4.1" stroke="#e8e8e8" stroke-width="0.7"/></svg>
<div class="a" style="left:224px;top:83px;width:432px;height:353px;background:#2f3031"></div>
<svg class="a" style="left:0;top:0" width="656" height="436" stroke="#333539" stroke-width="0.8"><line x1="225.7" y1="84" x2="225.7" y2="436"/><line x1="248.8" y1="84" x2="248.8" y2="436"/><line x1="271.9" y1="84" x2="271.9" y2="436"/><line x1="295.1" y1="84" x2="295.1" y2="436"/><line x1="318.2" y1="84" x2="318.2" y2="436"/><line x1="341.4" y1="84" x2="341.4" y2="436"/><line x1="364.5" y1="84" x2="364.5" y2="436"/><line x1="387.7" y1="84" x2="387.7" y2="436"/><line x1="410.8" y1="84" x2="410.8" y2="436"/><line x1="434.0" y1="84" x2="434.0" y2="436"/><line x1="457.1" y1="84" x2="457.1" y2="436"/><line x1="480.3" y1="84" x2="480.3" y2="436"/><line x1="503.4" y1="84" x2="503.4" y2="436"/><line x1="526.6" y1="84" x2="526.6" y2="436"/><line x1="549.7" y1="84" x2="549.7" y2="436"/><line x1="572.9" y1="84" x2="572.9" y2="436"/><line x1="596.0" y1="84" x2="596.0" y2="436"/><line x1="619.2" y1="84" x2="619.2" y2="436"/><line x1="642.3" y1="84" x2="642.3" y2="436"/><line x1="224" y1="99.5" x2="656" y2="99.5"/><line x1="224" y1="124.0" x2="656" y2="124.0"/><line x1="224" y1="148.5" x2="656" y2="148.5"/><line x1="224" y1="173.0" x2="656" y2="173.0"/><line x1="224" y1="197.5" x2="656" y2="197.5"/><line x1="224" y1="222.0" x2="656" y2="222.0"/><line x1="224" y1="246.5" x2="656" y2="246.5"/><line x1="224" y1="271.0" x2="656" y2="271.0"/><line x1="224" y1="295.5" x2="656" y2="295.5"/><line x1="224" y1="320.0" x2="656" y2="320.0"/><line x1="224" y1="344.5" x2="656" y2="344.5"/><line x1="224" y1="369.0" x2="656" y2="369.0"/><line x1="224" y1="393.5" x2="656" y2="393.5"/><line x1="224" y1="418.0" x2="656" y2="418.0"/></svg>
<div class="a" style="left:227.3px;top:87px;width:12.299999999999983px;height:7px;background:#3d3f43"></div><div class="t" style="left:227.3px;top:88.3px;width:12.299999999999983px;text-align:center;color:#a8a8a8;font-size:5.2px">+</div>
<div class="a" style="left:242.4px;top:87px;width:25.49999999999997px;height:7px;background:#3d3f43"></div><div class="t" style="left:242.4px;top:88.3px;width:25.49999999999997px;text-align:center;color:#a8a8a8;font-size:5.2px">Сверху</div>
<div class="a" style="left:270.7px;top:87px;width:32.900000000000034px;height:7px;background:#3d3f43"></div><div class="t" style="left:270.7px;top:88.3px;width:32.900000000000034px;text-align:center;color:#a8a8a8;font-size:5.2px">3D каркас</div>
<div class="a" style="left:305.5px;top:87px;width:74.39999999999998px;height:7px;background:#3d3f43"></div><div class="t" style="left:305.5px;top:88.3px;width:74.39999999999998px;text-align:center;color:#a8a8a8;font-size:5.2px">-- нет связанных видов --</div>
<svg class="a" style="left:0;top:0" width="656" height="436"><defs><pattern id="dots" width="2.5" height="2.5" patternUnits="userSpaceOnUse"><rect width="2.5" height="2.5" fill="#2a2a2c"/><rect x="1" y="1" width="0.7" height="0.7" fill="#6e6e6e"/></pattern><clipPath id="below"><polygon points="224.0,350.0 240.0,350.0 240.0,374.4 290.0,387.0 357.0,399.5 449.0,412.0 466.0,414.5 480.0,412.0 656.0,396.3 656.0,436.0 224.0,436.0"/></clipPath></defs><polygon points="224.0,341.4 240.0,354.0 290.0,365.3 330.0,374.4 357.0,379.7 449.0,389.8 466.0,393.9 480.0,389.9 541.0,381.0 656.0,369.0 656.0,389.3 480.0,405.0 466.0,407.5 449.0,405.0 357.0,392.5 290.0,380.0 240.0,367.4 224.0,358.0" fill="url(#dots)"/><polygon points="224,348 236,354 240,360 240,366 224,358" fill="#6a1c20" opacity="0.8"/><g clip-path="url(#below)" stroke="#8c8c8c" stroke-width="1"><line x1="224" y1="356.10" x2="656" y2="356.10"/><line x1="224" y1="362.85" x2="656" y2="362.85"/><line x1="224" y1="369.60" x2="656" y2="369.60"/><line x1="224" y1="376.35" x2="656" y2="376.35"/><line x1="224" y1="383.10" x2="656" y2="383.10"/><line x1="224" y1="389.85" x2="656" y2="389.85"/><line x1="224" y1="396.60" x2="656" y2="396.60"/><line x1="224" y1="403.35" x2="656" y2="403.35"/><line x1="224" y1="410.10" x2="656" y2="410.10"/><line x1="224" y1="416.85" x2="656" y2="416.85"/><line x1="224" y1="423.60" x2="656" y2="423.60"/><line x1="224" y1="430.35" x2="656" y2="430.35"/></g><line x1="240" y1="354.5" x2="655" y2="354.5" stroke="#1e1eb4" stroke-width="1.9"/><polyline points="224.0,341.4 240.0,354.0 290.0,365.3 330.0,374.4 357.0,379.7 449.0,389.8 466.0,393.9 480.0,389.9 541.0,381.0 656.0,369.0" fill="none" stroke="#e6e6e6" stroke-width="1.2"/><polyline points="224.0,350.0 240.0,362.8 282.0,371.0 330.0,382.6 357.0,387.8 449.0,398.6 466.0,402.0 480.0,398.3 656.0,377.6" fill="none" stroke="#a81c1c" stroke-width="2.8" stroke-dasharray="7 1"/><polyline points="224.0,358.5 240.0,367.9 290.0,380.5 357.0,393.0 449.0,405.5 466.0,408.0 480.0,405.5 656.0,389.8" fill="none" stroke="#a8a8f0" stroke-width="0.9"/><polyline points="224.0,360.3 240.0,369.7 290.0,382.3 357.0,394.8 449.0,407.3 466.0,409.8 480.0,407.3 656.0,391.6" fill="none" stroke="#2e2ed4" stroke-width="1.3"/><polyline points="224.0,362.1 240.0,371.5 290.0,384.1 357.0,396.6 449.0,409.1 466.0,411.6 480.0,409.1 656.0,393.4" fill="none" stroke="#e0e0e0" stroke-width="0.9"/><polyline points="224.0,364.0 240.0,373.4 290.0,386.0 357.0,398.5 449.0,411.0 466.0,413.5 480.0,411.0 656.0,395.3" fill="none" stroke="#3838e0" stroke-width="1.1"/><polyline points="224.0,365.8 240.0,375.2 290.0,387.8 357.0,400.3 449.0,412.8 466.0,415.3 480.0,412.8 656.0,397.1" fill="none" stroke="#c4c4f0" stroke-width="0.9"/><line x1="270" y1="374.96" x2="270" y2="378.96" stroke="#e8e8e8" stroke-width="0.8"/><line x1="335" y1="388.3955223880597" x2="335" y2="392.3955223880597" stroke="#e8e8e8" stroke-width="0.8"/><line x1="377" y1="395.2173913043478" x2="377" y2="399.2173913043478" stroke="#e8e8e8" stroke-width="0.8"/><line x1="434" y1="402.9619565217391" x2="434" y2="406.9619565217391" stroke="#e8e8e8" stroke-width="0.8"/><line x1="510" y1="402.3238636363636" x2="510" y2="406.3238636363636" stroke="#e8e8e8" stroke-width="0.8"/><line x1="590" y1="395.1875" x2="590" y2="399.1875" stroke="#e8e8e8" stroke-width="0.8"/><line x1="622" y1="392.3329545454545" x2="622" y2="396.3329545454545" stroke="#e8e8e8" stroke-width="0.8"/><line x1="240.4" y1="176" x2="240.4" y2="436" stroke="#d8d8d8" stroke-width="1"/><line x1="238.8" y1="376" x2="238.8" y2="436" stroke="#c8c8c8" stroke-width="0.8"/><line x1="356.5" y1="202" x2="356.5" y2="436" stroke="#d8d8d8" stroke-width="1"/><line x1="466" y1="255" x2="466" y2="436" stroke="#d8d8d8" stroke-width="1"/><path d="M236.3 165 V171.5 Q236.3 176.3 240.5 176.3 Q244.7 176.3 244.7 171.5 V165" fill="none" stroke="#d8d8d8" stroke-width="0.9"/><path d="M352.2 190.5 V197.5 Q352.2 202.2 357 202.2 Q362.2 202.2 362.2 197.5 V190.5" fill="none" stroke="#d8d8d8" stroke-width="0.9"/><line x1="240.5" y1="189.2" x2="268.8" y2="189.2" stroke="#d8d8d8" stroke-width="0.9"/><line x1="240.5" y1="197.2" x2="268.8" y2="197.2" stroke="#d8d8d8" stroke-width="0.9"/><line x1="240.5" y1="205.2" x2="268.8" y2="205.2" stroke="#d8d8d8" stroke-width="0.9"/><line x1="240.5" y1="213.2" x2="268.8" y2="213.2" stroke="#d8d8d8" stroke-width="0.9"/><line x1="240.5" y1="221.2" x2="268.8" y2="221.2" stroke="#d8d8d8" stroke-width="0.9"/><line x1="356.5" y1="213.9" x2="385.1" y2="213.9" stroke="#d8d8d8" stroke-width="0.9"/><line x1="356.5" y1="222.6" x2="385.1" y2="222.6" stroke="#d8d8d8" stroke-width="0.9"/><line x1="356.5" y1="230.8" x2="385.1" y2="230.8" stroke="#d8d8d8" stroke-width="0.9"/><line x1="356.5" y1="239.1" x2="385.1" y2="239.1" stroke="#d8d8d8" stroke-width="0.9"/><line x1="356.5" y1="247.4" x2="385.1" y2="247.4" stroke="#d8d8d8" stroke-width="0.9"/><line x1="228.8" y1="349" x2="228.8" y2="436" stroke="#30c030" stroke-width="1"/><line x1="235.7" y1="376" x2="235.7" y2="436" stroke="#111" stroke-width="1.2"/><line x1="262.6" y1="359.1076" x2="262.6" y2="436" stroke="#2020c0" stroke-width="1.2"/><line x1="308.9" y1="369.59975" x2="308.9" y2="436" stroke="#2020c0" stroke-width="1.2"/><line x1="400.4" y1="384.4645652173913" x2="400.4" y2="436" stroke="#2020c0" stroke-width="1.2"/><line x1="449" y1="389.8" x2="449" y2="436" stroke="#2020c0" stroke-width="1.2"/><line x1="494.8" y1="387.7406557377049" x2="494.8" y2="436" stroke="#2020c0" stroke-width="1.2"/><line x1="539.6" y1="381.20426229508195" x2="539.6" y2="436" stroke="#2020c0" stroke-width="1.2"/><line x1="586.8" y1="376.2208695652174" x2="586.8" y2="436" stroke="#2020c0" stroke-width="1.2"/><line x1="633" y1="371.4" x2="633" y2="436" stroke="#2020c0" stroke-width="1.2"/><line x1="286" y1="364.396" x2="286" y2="436" stroke="#d8d8d8" stroke-width="0.8" stroke-dasharray="3 1.5"/><line x1="289.3" y1="365.1418" x2="289.3" y2="436" stroke="#d8d8d8" stroke-width="0.8" stroke-dasharray="3 1.5"/><line x1="452.3" y1="390.5958823529412" x2="452.3" y2="436" stroke="#d8d8d8" stroke-width="0.8" stroke-dasharray="3 1.5"/><line x1="455.3" y1="391.3194117647059" x2="455.3" y2="436" stroke="#d8d8d8" stroke-width="0.8" stroke-dasharray="3 1.5"/><line x1="542.2" y1="381" x2="542.2" y2="436" stroke="#d8d8d8" stroke-width="0.9"/><line x1="531" y1="436" x2="656" y2="390" stroke="#c8c8c8" stroke-width="0.8"/><line x1="541" y1="381" x2="656" y2="402" stroke="#9a9a9a" stroke-width="0.7"/><polyline points="224,388.8 290,408.5 342,424 400,432 440,436" fill="none" stroke="#d42020" stroke-width="1.4" stroke-dasharray="3 2"/><polyline points="470,436 656,416.2" fill="none" stroke="#d42020" stroke-width="1.4" stroke-dasharray="3 2"/><path d="M246.7 379 L243.2 392.5 H250.2 Z" fill="none" stroke="#e0e0e0" stroke-width="0.9"/><line x1="246.7" y1="392.5" x2="246.7" y2="425.4" stroke="#e0e0e0" stroke-width="0.9"/><rect x="242" y="425.4" width="10" height="11" fill="none" stroke="#e0e0e0" stroke-width="0.9"/><line x1="252" y1="430" x2="287" y2="430" stroke="#e0e0e0" stroke-width="0.9"/><path d="M300 431 L287 427 V435 Z" fill="none" stroke="#e0e0e0" stroke-width="0.9"/><path d="M306.5 427.5 L312.5 434 M312.5 427.5 L306.5 434" stroke="#e0e0e0" stroke-width="0.9"/><path d="M232 410 L236 418 L240 410" fill="none" stroke="#bbb" stroke-width="0.7"/><circle cx="236.5" cy="351.5" r="2.3" fill="#2ab8e0"/><line x1="503.3" y1="270.5" x2="503.3" y2="352" stroke="#2020d0" stroke-width="1.2"/><path d="M501.5 344 L503.3 352 L505.1 344 Z" fill="#2020d0"/><line x1="503" y1="270.6" x2="528.2" y2="270.6" stroke="#2020d0" stroke-width="1"/><line x1="567.3" y1="321.8" x2="567.3" y2="365.5" stroke="#e0e0e0" stroke-width="0.9"/><line x1="567" y1="321.8" x2="616.7" y2="321.8" stroke="#e0e0e0" stroke-width="0.7"/><line x1="229" y1="334.5" x2="244.5" y2="334.5" stroke="#e0e0e0" stroke-width="0.7"/><line x1="279.5" y1="350.5" x2="295.5" y2="350.5" stroke="#e0e0e0" stroke-width="0.7"/><line x1="445.3" y1="376.5" x2="462" y2="376.5" stroke="#e0e0e0" stroke-width="0.7"/><line x1="224" y1="344.5" x2="236" y2="350.5" stroke="#bdbdbd" stroke-width="0.7"/><line x1="224" y1="349.1" x2="240" y2="349.1" stroke="#9a9a9a" stroke-width="0.7"/></svg>
<div class="t" style="left:243px;top:182.6px;color:#dcdcdc;font-size:6.3px;transform-origin:0 0;transform:scaleX(0.95);">У 5°09'</div>
<div class="t" style="left:243px;top:214.6px;color:#dcdcdc;font-size:6.3px;transform-origin:0 0;transform:scaleX(0.95);">Б=1.18</div>
<div class="t" style="left:359px;top:207.3px;color:#dcdcdc;font-size:6.3px;transform-origin:0 0;transform:scaleX(0.95);">У 0°47'</div>
<div class="t" style="left:359px;top:216.0px;color:#dcdcdc;font-size:6.3px;transform-origin:0 0;transform:scaleX(0.95);">R=1670</div>
<div class="t" style="left:359px;top:224.20000000000002px;color:#dcdcdc;font-size:6.3px;transform-origin:0 0;transform:scaleX(0.95);">T=11.45</div>
<div class="t" style="left:359px;top:232.5px;color:#dcdcdc;font-size:6.3px;transform-origin:0 0;transform:scaleX(0.95);">K=22.89</div>
<div class="t" style="left:359px;top:240.8px;color:#dcdcdc;font-size:6.3px;transform-origin:0 0;transform:scaleX(0.95);">Б=0.04</div>
<div class="t" style="left:233.6px;top:296.4px;color:#dcdcdc;font-size:6.3px;transform-origin:0 0;transform:rotate(-90deg) scaleX(1.0)">ПК485+36.84</div>
<div class="t" style="left:241.1px;top:294.7px;color:#dcdcdc;font-size:6.3px;transform-origin:0 0;transform:rotate(-90deg) scaleX(1.08)">отм. Уг 40.02</div>
<div class="t" style="left:349.9px;top:321.2px;color:#dcdcdc;font-size:6.3px;transform-origin:0 0;transform:rotate(-90deg) scaleX(0.98)">ПК485+99.66</div>
<div class="t" style="left:355.9px;top:320.5px;color:#dcdcdc;font-size:6.3px;transform-origin:0 0;transform:rotate(-90deg) scaleX(0.99)">отм. Уг 37.54</div>
<div class="t" style="left:458.6px;top:334.7px;color:#dcdcdc;font-size:6.3px;transform-origin:0 0;transform:rotate(-90deg) scaleX(0.96)">ПК486+58.85</div>
<div class="t" style="left:466.1px;top:334.2px;color:#dcdcdc;font-size:6.3px;transform-origin:0 0;transform:rotate(-90deg) scaleX(1.08)">отм. Уг 36.02</div>
<div class="t" style="left:229px;top:329.2px;color:#e6e6e6;font-size:5.2px;font-weight:bold;transform-origin:0 0;transform:scaleX(0.8);font-style:italic;">Луп 807</div>
<div class="t" style="left:232px;top:336.1px;color:#e6e6e6;font-size:4.4px;font-weight:bold;transform-origin:0 0;transform:scaleX(0.85);">42.91</div>
<div class="t" style="left:279.5px;top:345px;color:#e6e6e6;font-size:5.2px;font-weight:bold;transform-origin:0 0;transform:scaleX(0.8);font-style:italic;">Луп 807</div>
<div class="t" style="left:282.5px;top:351.2px;color:#e6e6e6;font-size:4.4px;font-weight:bold;transform-origin:0 0;transform:scaleX(0.85);">41.24</div>
<div class="t" style="left:445.3px;top:370.7px;color:#e6e6e6;font-size:5.2px;font-weight:bold;transform-origin:0 0;transform:scaleX(0.82);font-style:italic;">Луп 851</div>
<div class="t" style="left:449px;top:377.5px;color:#e6e6e6;font-size:4.4px;font-weight:bold;transform-origin:0 0;transform:scaleX(0.85);">38.36</div>
<div class="t" style="left:225.5px;top:342.3px;color:#f0f0f0;font-size:4.6px;font-weight:bold;transform-origin:0 0;transform:scaleX(0.8)">7.96</div>
<div class="t" style="left:242.6px;top:344.6px;color:#d8d8d8;font-size:4.2px;transform-origin:0 0;transform:scaleX(0.8)">0.5</div>
<div class="t" style="left:242.6px;top:348.6px;color:#d8d8d8;font-size:4.2px;transform-origin:0 0;transform:scaleX(0.8)">0.5</div>
<div class="t" style="left:567.8px;top:315px;color:#e4e4e4;font-size:7px;transform-origin:0 0;transform:scaleX(0.72);font-style:italic">Кожух 720.00 x 10.00</div>
<div class="t" style="left:503.5px;top:263px;color:#2424d8;font-size:7px;font-weight:bold;transform-origin:0 0;transform:scaleX(0.95);font-style:italic">18.61.0</div>
<div class="a" style="left:117.5px;top:190.7px;width:148px;height:28.8px;background:#f9f9f9;border:0.6px solid #d8d8d8;border-radius:3px;box-shadow:1px 2px 3px rgba(0,0,0,0.25)"></div>
<div class="a" style="left:119.5px;top:192.8px;width:145px;height:11px;background:#f0f0f0;border-radius:2px"></div>
<div class="t" style="left:135.2px;top:195.8px;color:#1a1a1a;font-size:5.6px">Определение расчетных уровней воды</div>
<div class="t" style="left:135.2px;top:210.2px;color:#1a1a1a;font-size:5.6px">Удалить все выноски ГВ</div>
<div class="a" style="left:405.7px;top:91.2px;width:240px;height:169.8px;background:#efefef;border:0.6px solid #9a9a9a;border-radius:4px;box-shadow:0 1px 4px rgba(0,0,0,0.35)"></div><div class="a" style="left:406.3px;top:91.8px;width:238.8px;height:15.2px;background:#f4f4f4;border-radius:3.5px 3.5px 0 0"></div>
<div class="t" style="left:410.2px;top:96.6px;color:#111;font-size:5.75px">Определение расчетных уровней воды</div>
<svg class="a" style="left:635.5px;top:95.5px" width="6" height="6"><path d="M0.5 0.5 L5.5 5.5 M5.5 0.5 L0.5 5.5" stroke="#333" stroke-width="0.8"/></svg>
<svg class="a" style="left:0;top:0" width="656" height="436"><rect x="408.7" y="109" width="105.4" height="74" rx="1.2" fill="#fff" stroke="#cdcdcd" stroke-width="0.7"/><rect x="409.2" y="121.5" width="104.5" height="8.5" fill="#ebebeb"/><line x1="410.5" y1="130.00" x2="512.5" y2="130.00" stroke="#e8e8e8" stroke-width="0.6"/><line x1="410.5" y1="137.95" x2="512.5" y2="137.95" stroke="#e8e8e8" stroke-width="0.6"/><line x1="410.5" y1="145.90" x2="512.5" y2="145.90" stroke="#e8e8e8" stroke-width="0.6"/><line x1="410.5" y1="153.85" x2="512.5" y2="153.85" stroke="#e8e8e8" stroke-width="0.6"/><line x1="410.5" y1="161.80" x2="512.5" y2="161.80" stroke="#e8e8e8" stroke-width="0.6"/><line x1="410.5" y1="169.75" x2="512.5" y2="169.75" stroke="#e8e8e8" stroke-width="0.6"/><line x1="410.5" y1="177.70" x2="512.5" y2="177.70" stroke="#e8e8e8" stroke-width="0.6"/><line x1="461.7" y1="110" x2="461.7" y2="183" stroke="#e6e6e6" stroke-width="0.6"/><line x1="487.3" y1="110" x2="487.3" y2="183" stroke="#e6e6e6" stroke-width="0.6"/><line x1="516" y1="117.2" x2="642.5" y2="117.2" stroke="#d2d2d2" stroke-width="0.8"/><line x1="520" y1="144.4" x2="642" y2="144.4" stroke="#d2d2d2" stroke-width="0.8"/><line x1="410" y1="187.5" x2="640" y2="187.5" stroke="#d2d2d2" stroke-width="0.8"/><line x1="410" y1="208.4" x2="640" y2="208.4" stroke="#d2d2d2" stroke-width="0.8"/><line x1="410" y1="241.3" x2="640" y2="241.3" stroke="#d2d2d2" stroke-width="0.8"/><rect x="520.3" y="122.6" width="5" height="5" fill="#fff" stroke="#555" stroke-width="0.6"/><rect x="520.3" y="134.6" width="5" height="5" fill="#fff" stroke="#555" stroke-width="0.6"/><rect x="562.6" y="149.7" width="74.39999999999998" height="7.300000000000011" rx="0.8" fill="#fff" stroke="#dadada" stroke-width="0.6"/><rect x="616.9" y="160.5" width="20.100000000000023" height="8.800000000000011" rx="0.8" fill="#fff" stroke="#dadada" stroke-width="0.6"/><rect x="518.7" y="171.7" width="86.59999999999991" height="8.5" rx="0.8" fill="#fafafa" stroke="#f0f0f0" stroke-width="0.6"/><rect x="616.9" y="171.7" width="20.100000000000023" height="8.5" rx="0.8" fill="#fff" stroke="#dadada" stroke-width="0.6"/><rect x="617.3" y="191.4" width="20.0" height="9.099999999999994" rx="0.8" fill="#fff" stroke="#dadada" stroke-width="0.6"/><rect x="459.3" y="210.5" width="50.099999999999966" height="9.099999999999994" rx="0.8" fill="#fff" stroke="#dadada" stroke-width="0.6"/><rect x="459.6" y="225.5" width="20.299999999999955" height="8.900000000000006" rx="0.8" fill="#fff" stroke="#dadada" stroke-width="0.6"/><rect x="513.9" y="209.6" width="127.10000000000002" height="27.400000000000006" rx="0.8" fill="#fff" stroke="#e4e4e4" stroke-width="0.6"/><line x1="539" y1="210" x2="539" y2="236.5" stroke="#ededed" stroke-width="0.6"/><path d="M631.5 152.4 L633.4 154.3 L635.3 152.4" fill="none" stroke="#666" stroke-width="0.6"/><path d="M504 213.8 L505.9 215.7 L507.8 213.8" fill="none" stroke="#666" stroke-width="0.6"/><rect x="409.5" y="191.2" width="10.5" height="10.6" rx="1" fill="#d8d8d8" stroke="#555" stroke-width="0.8"/><path d="M414.7 192.8 V200.2" stroke="#d01010" stroke-width="1.6"/><path d="M412.3 196.5 H417.2" stroke="#e04040" stroke-width="0.8"/><rect x="427.1" y="191.2" width="10.2" height="10.6" rx="1" fill="#d8d8d8" stroke="#555" stroke-width="0.8"/><path d="M429.8 193.3 H433 Q435 193.3 435 196.5 Q435 199.7 432.5 199.7 H430.5" fill="none" stroke="#108a8a" stroke-width="1"/><rect x="444.2" y="191.2" width="10.2" height="10.6" rx="1" fill="#cdcdcd" stroke="#c0c0c0" stroke-width="0.8"/><path d="M446 193 L452.6 200 M452.6 193 L446 200" stroke="#bdbdbd" stroke-width="1"/><rect x="484.5" y="225.4" width="10" height="10.2" rx="1" fill="#dcdcdc" stroke="#555" stroke-width="0.8"/><path d="M486.3 230.5 L488.8 233.5 L493 227" fill="none" stroke="#e01818" stroke-width="1.4"/><rect x="498.8" y="225.4" width="10" height="10.2" rx="1" fill="#cdcdcd" stroke="#c4c4c4" stroke-width="0.8"/><path d="M500.5 227.2 L507 233.8 M507 227.2 L500.5 233.8" stroke="#bdbdbd" stroke-width="1"/><rect x="464.8" y="192.8" width="48.19999999999999" height="9.199999999999989" rx="1.5" fill="#fbfbfb" stroke="#e2e2e2" stroke-width="0.6"/><rect x="410.9" y="246.2" width="37.10000000000002" height="9.0" rx="1.5" fill="#fbfbfb" stroke="#e2e2e2" stroke-width="0.6"/><rect x="453.7" y="246.2" width="37.60000000000002" height="9.0" rx="1.5" fill="#fbfbfb" stroke="#e2e2e2" stroke-width="0.6"/><rect x="567" y="245.6" width="34.39999999999998" height="10.0" rx="1.5" fill="#fbfbfb" stroke="#6a8fc0" stroke-width="1"/><rect x="607" y="246.2" width="33" height="9.0" rx="1.5" fill="#fbfbfb" stroke="#e2e2e2" stroke-width="0.6"/></svg>
<div class="t" style="left:412.7px;top:114.08px;color:#111;font-size:5.3px;">Участок</div>
<div class="t" style="left:465.4px;top:114.08px;color:#111;font-size:5.3px;">Нача...</div>
<div class="t" style="left:491px;top:114.08px;color:#111;font-size:5.3px;">Коне...</div>
<div class="t" style="left:412.7px;top:123.68px;color:#111;font-size:5.3px;">Русло</div>
<div class="t" style="left:470px;top:123.68px;color:#111;font-size:5.3px;">537</div>
<div class="t" style="left:495.5px;top:123.68px;color:#111;font-size:5.3px;">892</div>
<div class="t" style="left:516.6px;top:111.18px;color:#111;font-size:5.3px;">Скорость течения. Русло (355м)</div>
<div class="t" style="left:527.5px;top:122.98px;color:#111;font-size:5.3px;">Для каждого расчетного уровня</div>
<div class="t" style="left:527.5px;top:134.99px;color:#111;font-size:5.3px;">Задается пользователем, м/с</div>
<div class="t" style="left:520px;top:151.29px;color:#111;font-size:5.3px;">Метод расчета:</div>
<div class="t" style="left:564.2px;top:151.29px;color:#111;font-size:5.3px;">по Маннингу (Y=1/6)</div>
<div class="t" style="left:520px;top:162.89px;color:#111;font-size:5.3px;">Уклон водной поверхности (I), %о:</div>
<div class="t" style="left:619px;top:162.89px;color:#111;font-size:5.3px;">0</div>
<div class="t" style="left:519.5px;top:173.89px;color:#111;font-size:5.3px;">Коэффициент шероховатости (n)</div>
<div class="t" style="left:607.3px;top:173.89px;color:#111;font-size:5.3px;">:</div>
<div class="t" style="left:619px;top:173.89px;color:#111;font-size:5.3px;">0.000</div>
<div class="t" style="left:470.8px;top:195.39px;color:#111;font-size:5.3px;">Предв. расчет</div>
<div class="t" style="left:520.1px;top:193.9px;color:#111;font-size:5.3px;">Шаг расчета по уровню, м:</div>
<div class="t" style="left:619.5px;top:193.89px;color:#111;font-size:5.3px;">0.2</div>
<div class="t" style="left:409.6px;top:212.69px;color:#111;font-size:5.3px;">Обеспечен. (P,%):</div>
<div class="t" style="left:409.4px;top:228.19px;color:#111;font-size:5.3px;">Расход (Q, м куб/с):</div>
<div class="t" style="left:461.5px;top:227.89px;color:#111;font-size:5.3px;">0</div>
<div class="t" style="left:516.5px;top:213.89px;color:#111;font-size:5.3px;">1</div>
<div class="t" style="left:516.5px;top:223.58px;color:#111;font-size:5.3px;">0</div>
<div class="t" style="left:421.5px;top:248.69px;color:#111;font-size:5.3px;">Расчет</div>
<div class="t" style="left:462.7px;top:248.69px;color:#111;font-size:5.3px;">Показать</div>
<div class="t" style="left:580.5px;top:248.69px;color:#111;font-size:5.3px;">ОК</div>
<div class="t" style="left:614.6px;top:248.69px;color:#111;font-size:5.3px;">Отмена</div>

</body></html>
